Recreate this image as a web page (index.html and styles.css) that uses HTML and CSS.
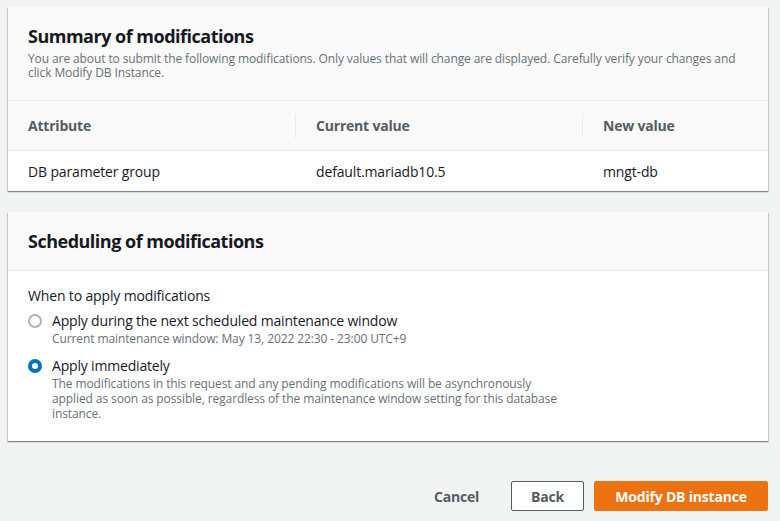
FILE: index.html
```html
<!DOCTYPE html>
<html lang="en">
  <head>
    <meta charset="UTF-8" />
    <meta name="viewport" content="width=device-width, initial-scale=1.0" />
    <title>Modify DB instance</title>
    <link rel="stylesheet" href="styles.css">
  </head>
  <body>
    <div class="page">
      <!-- summary card -->
      <div class="card">
        <div class="card-header header-summary">
          <h2 class="card-title">Summary of modifications</h2>
          <p class="card-desc">
            You are about to submit the following modifications. Only values that will change are displayed. Carefully verify your changes and click Modify DB Instance.
          </p>
        </div>
        <div class="table">
          <div class="th">Attribute</div>
          <div class="th th-sep">Current value</div>
          <div class="th th-sep">New value</div>
          <div class="td">DB parameter group</div>
          <div class="td">default.mariadb10.5</div>
          <div class="td">mngt-db</div>
        </div>
      </div>

      <!-- scheduling card -->
      <div class="card card-second">
        <div class="card-header header-schedule">
          <h2 class="card-title">Scheduling of modifications</h2>
        </div>
        <div class="card-body">
          <div class="field-label">When to apply modifications</div>
          <label class="radio-row">
            <span class="radio"></span>
            <span class="radio-text">
              <span class="radio-label">Apply during the next scheduled maintenance window</span>
              <span class="radio-desc">Current maintenance window: May 13, 2022 22:30 - 23:00 UTC+9</span>
            </span>
          </label>
          <label class="radio-row radio-row-gap">
            <span class="radio radio-checked"></span>
            <span class="radio-text">
              <span class="radio-label">Apply immediately</span>
              <span class="radio-desc radio-desc-long">The modifications in this request and any pending modifications will be asynchronously applied as soon as possible, regardless of the maintenance window setting for this database instance.</span>
            </span>
          </label>
        </div>
      </div>

      <div class="actions">
        <button class="btn btn-link">Cancel</button>
        <button class="btn btn-normal">Back</button>
        <button class="btn btn-primary">Modify DB instance</button>
      </div>
    </div>
  </body>
</html>
```

FILE: styles.css
```css
body {
  margin: 0;
  background-color: #f2f3f3;
  font-family: "Open Sans", "Liberation Sans", sans-serif;
  color: #16191f;
}

* {
  box-sizing: border-box;
}

.page {
  padding: 7px 12px 0 8px;
}

.card {
  background-color: #ffffff;
  box-shadow: 0 1px 1px 0 rgba(0, 28, 36, 0.3), 1px 1px 1px 0 rgba(0, 28, 36, 0.15), -1px 1px 1px 0 rgba(0, 28, 36, 0.15);
}

.card-second {
  margin-top: 21px;
}

.card-header {
  background-color: #fafafa;
  border-bottom: 1px solid #eaeded;
  padding: 18px 20px;
}

.header-summary {
  padding-bottom: 20px;
}

.card-title {
  margin: 0;
  font-size: 18px;
  line-height: 22px;
  font-weight: 700;
  letter-spacing: -0.5px;
}

.card-desc {
  margin: 5px 0 0;
  font-size: 12px;
  line-height: 14px;
  color: #687078;
  letter-spacing: -0.1px;
}

.table {
  display: grid;
  grid-template-columns: 287px 287px 1fr;
}

.th {
  background-color: #fafafa;
  border-bottom: 1px solid #eaeded;
  height: 50px;
  padding: 0 20px;
  display: flex;
  align-items: center;
  font-size: 14px;
  font-weight: 700;
  color: #545b64;
  letter-spacing: -0.2px;
  position: relative;
}

.th-sep::before {
  content: "";
  position: absolute;
  left: 0;
  top: 13px;
  height: 24px;
  border-left: 1px solid #eaeded;
}

.th-sep {
  padding-left: 21px;
}

.td {
  height: 40px;
  padding: 0 20px;
  display: flex;
  align-items: center;
  font-size: 14px;
  letter-spacing: -0.15px;
}

.td + .td {
  padding-left: 21px;
}

.card-body {
  padding: 15px 20px 20px;
}

.field-label {
  font-size: 14px;
  line-height: 20px;
  letter-spacing: -0.15px;
}

.radio-row {
  display: flex;
  gap: 10px;
  margin-top: 5px;
}

.radio-row-gap {
  margin-top: 9px;
}

.radio {
  flex: 0 0 auto;
  width: 14px;
  height: 14px;
  margin-top: 3px;
  border: 2px solid #aab7b8;
  border-radius: 50%;
  background-color: #ffffff;
}

.radio-checked {
  border: 4px solid #0073bb;
}

.radio-text {
  display: flex;
  flex-direction: column;
}

.radio-label {
  font-size: 14px;
  line-height: 20px;
  letter-spacing: -0.18px;
}

.radio-desc {
  font-size: 12px;
  line-height: 16px;
  color: #687078;
  letter-spacing: -0.1px;
}

.radio-desc-long {
  line-height: 15px;
  max-width: 505px;
}

.actions {
  display: flex;
  justify-content: flex-end;
  align-items: center;
  gap: 10px;
  margin-top: 40px;
}

.btn {
  font-family: inherit;
  font-size: 14px;
  font-weight: 700;
  height: 30px;
  border-radius: 2px;
  padding: 0 19px;
  white-space: nowrap;
  letter-spacing: -0.2px;
  cursor: pointer;
}

.btn-link {
  background: none;
  border: none;
  color: #545b64;
  padding-right: 22px;
}

.btn-normal {
  background-color: #ffffff;
  border: 1px solid #545b64;
  color: #545b64;
}

.btn-primary {
  background-color: #ec7211;
  border: 1px solid #ec7211;
  color: #ffffff;
  width: 174px;
}
```
